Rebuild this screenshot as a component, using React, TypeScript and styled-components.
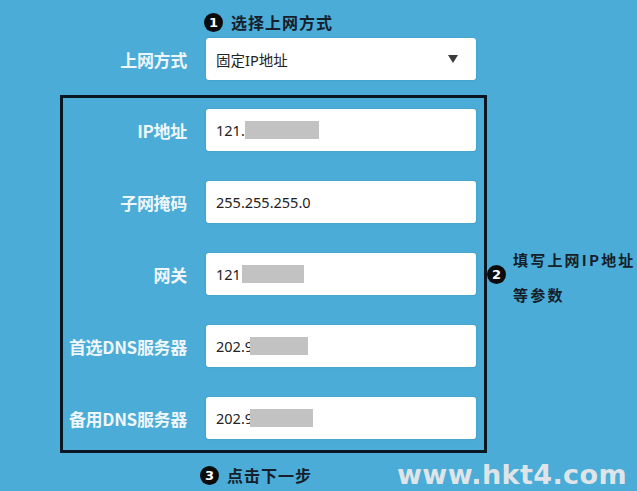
import React from "react";
import styled, { createGlobalStyle } from "styled-components";

const GlobalStyle = createGlobalStyle`
  html, body {
    margin: 0;
    padding: 0;
    background: #4aacd7;
  }
  body {
    font-family: "Noto Sans", "Noto Sans CJK SC", sans-serif;
  }
`;

const Page = styled.div`
  width: 637px;
  height: 491px;
  overflow: hidden;
  background: #4aacd7;
  padding-top: 11px;
  box-sizing: border-box;
`;

const Step = styled.div<{ $indent?: number }>`
  display: flex;
  align-items: center;
  gap: 8px;
  padding-left: ${(p) => p.$indent ?? 0}px;
  color: #15202b;
  font-family: "Noto Sans CJK SC", sans-serif;
  font-weight: 700;
  font-size: 16px;
  letter-spacing: 1px;
  line-height: 22px;
`;

const Badge = styled.span`
  width: 19px;
  height: 19px;
  flex: none;
  border-radius: 50%;
  background: #0b0b0b;
  color: #fff;
  font-family: "DejaVu Sans", sans-serif;
  font-weight: 700;
  font-size: 13px;
  line-height: 19px;
  text-align: center;
  letter-spacing: 0;
`;

const FormRow = styled.div`
  display: grid;
  grid-template-columns: 124px 270px;
  column-gap: 19px;
  align-items: center;
`;

const TopRow = styled(FormRow)`
  margin-top: 5px;
  padding-left: 63px;
`;

const Label = styled.div`
  text-align: right;
  color: #eef6fb;
  font-family: "Noto Sans CJK SC", sans-serif;
  font-weight: 700;
  font-size: 17px;
  letter-spacing: -0.3px;
  white-space: nowrap;
`;

const Field = styled.div`
  position: relative;
  height: 42px;
  background: #fff;
  border-radius: 3px;
  box-shadow: 0 0 2px rgba(0, 0, 0, 0.15);
  display: flex;
  align-items: center;
  padding-left: 10px;
  box-sizing: border-box;
  color: #222;
  font-family: "Noto Sans", "Noto Sans CJK SC", sans-serif;
  font-size: 14.5px;
`;

const Arrow = styled.span`
  position: absolute;
  right: 18px;
  top: 50%;
  transform: translateY(-50%);
  width: 0;
  height: 0;
  border-left: 5px solid transparent;
  border-right: 5px solid transparent;
  border-top: 8px solid #3a3a3a;
`;

const Redact = styled.span<{ $left: number; $width: number }>`
  position: absolute;
  left: ${(p) => p.$left}px;
  width: ${(p) => p.$width}px;
  top: 12px;
  height: 18px;
  background: #c2c2c2;
`;

const Middle = styled.div`
  display: flex;
  align-items: center;
  margin-top: 15px;
`;

const Frame = styled.div`
  margin-left: 60px;
  width: 427px;
  height: 358px;
  box-sizing: border-box;
  border: 3px solid #0a1622;
  padding: 11px 0 0 0;
  display: flex;
  flex-direction: column;
  gap: 30px;
`;

const Note = styled.div`
  display: flex;
  align-items: center;
  gap: 7px;
  color: #15202b;
  font-family: "Noto Sans CJK SC", sans-serif;
  font-weight: 700;
  font-size: 15px;
  letter-spacing: 2.2px;
  white-space: nowrap;
`;

const NoteText = styled.div`
  line-height: 35px;
  margin-top: 6px;
`;

const Bottom = styled.div`
  display: flex;
  align-items: center;
  height: 30px;
  margin-top: 7px;
`;

const Watermark = styled.div`
  margin-left: 85px;
  color: #dfe4e8;
  font-family: "DejaVu Sans", sans-serif;
  font-weight: 700;
  font-size: 27px;
  letter-spacing: 0.4px;
  line-height: 30px;
`;

type Item = { label: string; value: string; redact?: [number, number] };

const items: Item[] = [
  { label: "IP地址", value: "121.", redact: [39, 74] },
  { label: "子网掩码", value: "255.255.255.0" },
  { label: "网关", value: "121", redact: [36, 62] },
  { label: "首选DNS服务器", value: "202.9", redact: [44, 58] },
  { label: "备用DNS服务器", value: "202.9", redact: [44, 63] },
];

export default function App() {
  return (
    <>
      <GlobalStyle />
      <Page>
        <Step $indent={204}>
          <Badge>1</Badge>
          选择上网方式
        </Step>
        <TopRow>
          <Label>上网方式</Label>
          <Field>
            固定IP地址
            <Arrow />
          </Field>
        </TopRow>
        <Middle>
          <Frame>
            {items.map((it) => (
              <FormRow key={it.label}>
                <Label>{it.label}</Label>
                <Field>
                  {it.value}
                  {it.redact && <Redact $left={it.redact[0]} $width={it.redact[1]} />}
                </Field>
              </FormRow>
            ))}
          </Frame>
          <Note>
            <Badge>2</Badge>
            <NoteText>
              填写上网IP地址
              <br />
              等参数
            </NoteText>
          </Note>
        </Middle>
        <Bottom>
          <Step $indent={200}>
            <Badge>3</Badge>
            点击下一步
          </Step>
          <Watermark>www.hkt4.com</Watermark>
        </Bottom>
      </Page>
    </>
  );
}
